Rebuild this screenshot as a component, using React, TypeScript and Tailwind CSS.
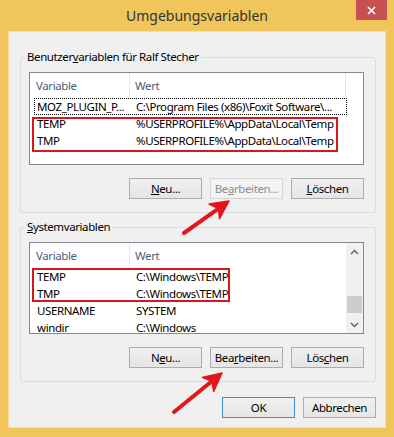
import React from "react";

type BtnProps = {
  children: React.ReactNode;
  disabled?: boolean;
  primary?: boolean;
};

function Btn({ children, disabled, primary }: BtnProps) {
  if (disabled) {
    return (
      <div className="h-[21px] w-[73px] flex items-center justify-center border border-[#d5d5d5] bg-[#f4f4f4] text-[#8d8d8d]">
        {children}
      </div>
    );
  }
  if (primary) {
    return (
      <div className="h-[21px] w-[73px] flex items-center justify-center border border-[#3c8fd6] bg-gradient-to-b from-[#f0f0f0] to-[#e5e5e5] text-black">
        {children}
      </div>
    );
  }
  return (
    <div className="h-[21px] w-[73px] flex items-center justify-center border border-[#acacac] bg-gradient-to-b from-[#f0f0f0] to-[#e5e5e5] text-black">
      {children}
    </div>
  );
}

function Row({ name, value, focused }: { name: string; value: string; focused?: boolean }) {
  return (
    <div
      className={
        focused
          ? "ml-[4px] w-[313px] h-[17px] flex items-center border border-dotted border-black"
          : "ml-[4px] w-[313px] h-[17px] flex items-center border border-transparent"
      }
    >
      <div className="w-[99px] pl-[2px] whitespace-nowrap overflow-hidden">{name}</div>
      <div className="flex-1 pl-[2px] whitespace-nowrap overflow-hidden text-ellipsis">{value}</div>
    </div>
  );
}

function Arrow({ x1, y1, x2, y2 }: { x1: number; y1: number; x2: number; y2: number }) {
  const len = Math.hypot(x2 - x1, y2 - y1);
  const ang = (Math.atan2(y2 - y1, x2 - x1) * 180) / Math.PI;
  return (
    <g transform={`translate(${x1} ${y1}) rotate(${ang})`}>
      <line x1={0} y1={0} x2={len - 10} y2={0} stroke="#e3161c" strokeWidth={4} strokeLinecap="round" />
      <polygon
        points={`${len},0 ${len - 18},-9 ${len - 13},0 ${len - 18},9`}
        fill="#e3161c"
        stroke="#e3161c"
        strokeWidth={1.5}
        strokeLinejoin="round"
      />
    </g>
  );
}

export default function App() {
  return (
    <div className="relative w-[394px] h-[437px] bg-[#efc55c] flex flex-col font-['Noto_Sans',sans-serif] text-[11.5px] tracking-[-0.4px] text-black">
      {/* title bar */}
      <div className="relative h-[31px] shrink-0">
        <div className="text-center leading-[31px] text-[14px] tracking-normal text-[#333]">Umgebungsvariablen</div>
        <div className="absolute right-[7px] top-0 w-[31px] h-[20px] bg-[#c75050] flex items-center justify-center">
          <svg width="9" height="9" viewBox="0 0 9 9">
            <path d="M1 1 L8 8 M8 1 L1 8" stroke="white" strokeWidth="1.7" />
          </svg>
        </div>
      </div>

      {/* client */}
      <div className="mx-[8px] mb-[9px] flex-1 bg-[#f0f0f0] border border-[#f7df9c] flex flex-col">
        <fieldset className="mt-[17px] ml-[11px] mr-[9px] border border-[#dcdcdc] rounded-[3px]">
          <legend className="ml-[4px] px-[2px] leading-[16px]">
            Benutzer<span className="underline">v</span>ariablen für Ralf Stecher
          </legend>
          <div className="pl-[8px] pt-[7px] pb-[13px]">
            <div className="relative w-[335px] h-[93px] border border-[#828790] bg-white">
              <div className="flex h-[25px] text-[#4c607a]">
                <div className="w-[100px] h-full flex items-center pl-[6px] border-r border-[#e5e5e5]">Variable</div>
                <div className="w-[216px] h-full flex items-center pl-[5px] border-r border-[#e5e5e5]">Wert</div>
              </div>
              <Row name="MOZ_PLUGIN_P..." value="C:\Program Files (x86)\Foxit Software\..." focused />
              <Row name="TEMP" value="%USERPROFILE%\AppData\Local\Temp" />
              <Row name="TMP" value="%USERPROFILE%\AppData\Local\Temp" />
              <div className="absolute left-[2px] top-[44px] w-[306px] h-[35px] border-2 border-[#d8161d]" />
            </div>
            <div className="mt-[13px] w-[335px] flex justify-end gap-[8px]">
              <Btn>
                <span className="underline">N</span>eu...
              </Btn>
              <Btn disabled>
                Be<span className="underline">a</span>rbeiten...
              </Btn>
              <Btn>
                <span className="underline">L</span>öschen
              </Btn>
            </div>
          </div>
        </fieldset>

        <fieldset className="mt-[6px] ml-[11px] mr-[9px] border border-[#dcdcdc] rounded-[3px]">
          <legend className="ml-[4px] px-[2px] leading-[16px]">
            <span className="underline">S</span>ystemvariablen
          </legend>
          <div className="pl-[8px] pt-[7px] pb-[13px]">
            <div className="relative w-[335px] h-[92px] border border-[#828790] bg-white flex overflow-hidden">
              <div className="w-[316px]">
                <div className="flex h-[25px] text-[#4c607a]">
                  <div className="w-[100px] h-full flex items-center pl-[6px] border-r border-[#e5e5e5]">Variable</div>
                  <div className="flex-1 h-full flex items-center pl-[5px]">Wert</div>
                </div>
                <Row name="TEMP" value="C:\Windows\TEMP" />
                <Row name="TMP" value="C:\Windows\TEMP" />
                <Row name="USERNAME" value="SYSTEM" />
                <Row name="windir" value="C:\Windows" />
              </div>
              <div className="w-[17px] h-full bg-[#f0f0f0] flex flex-col items-center">
                <div className="h-[17px] w-full flex items-center justify-center">
                  <svg width="9" height="6" viewBox="0 0 9 6">
                    <path d="M1 5 L4.5 1.5 L8 5" fill="none" stroke="#606060" strokeWidth="1.4" />
                  </svg>
                </div>
                <div className="mt-[36px] w-[15px] h-[17px] bg-[#cdcdcd]" />
                <div className="mt-auto h-[17px] w-full flex items-center justify-center">
                  <svg width="9" height="6" viewBox="0 0 9 6">
                    <path d="M1 1 L4.5 4.5 L8 1" fill="none" stroke="#606060" strokeWidth="1.4" />
                  </svg>
                </div>
              </div>
              <div className="absolute left-[2px] top-[25px] w-[198px] h-[34px] border-2 border-[#d8161d]" />
            </div>
            <div className="mt-[13px] w-[335px] flex justify-end gap-[8px]">
              <Btn>
                N<span className="underline">e</span>u...
              </Btn>
              <Btn>
                Bea<span className="underline">r</span>beiten...
              </Btn>
              <Btn>
                Lös<span className="underline">c</span>hen
              </Btn>
            </div>
          </div>
        </fieldset>

        <div className="mt-[15px] mr-[9px] flex justify-end gap-[8px]">
          <Btn primary>OK</Btn>
          <Btn>Abbrechen</Btn>
        </div>
      </div>

      <svg className="absolute inset-0 pointer-events-none" width="394" height="437">
        <Arrow x1={184} y1={233} x2={229} y2={201} />
        <Arrow x1={174} y1={412} x2={222} y2={373} />
      </svg>
    </div>
  );
}
